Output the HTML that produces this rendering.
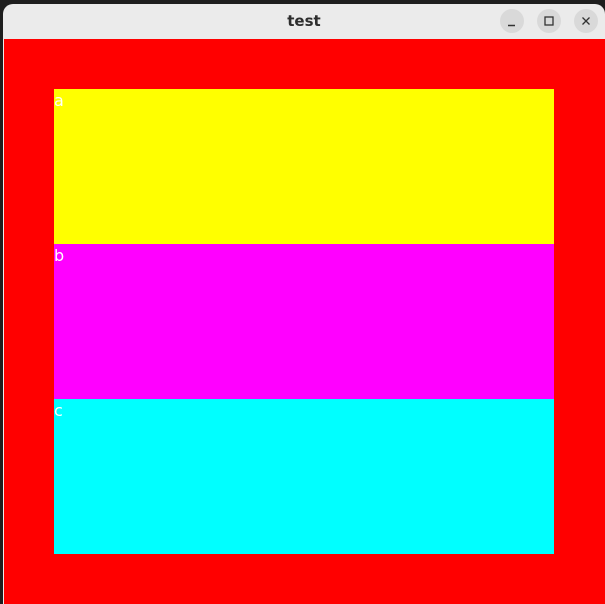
<!DOCTYPE html>
<html><head><meta charset="utf-8"><style>
html,body{margin:0;padding:0;width:605px;height:604px;overflow:hidden;background:#1e1e1e;font-family:"Liberation Sans","DejaVu Sans",sans-serif;position:relative}
.win{position:absolute;left:3px;top:4px;width:602px;height:600px;background:#ebebeb;border-radius:10px 10px 0 0;overflow:hidden}
.title{position:absolute;left:0;right:0;top:0;height:35px;text-align:center;line-height:35px;font-weight:bold;font-size:15px;color:#2e2e2e;font-family:"DejaVu Sans",sans-serif}
.btn{position:absolute;top:5px;width:24px;height:24px;border-radius:50%;background:#d9d9d9}
.red{position:absolute;left:4px;top:39px;width:601px;height:565px;background:#f00}
.blk{position:absolute;left:54px;width:500px;height:155px;color:#fff;font-family:"DejaVu Sans",sans-serif;font-size:16px;line-height:24px}
</style></head><body>
<div class="win">
<div class="title">test</div>
<div class="btn" style="left:497px"><svg width="24" height="24"><line x1="8" y1="16.5" x2="15" y2="16.5" stroke="#333" stroke-width="1.4"/></svg></div>
<div class="btn" style="left:534px"><svg width="24" height="24"><rect x="8" y="8" width="8" height="8" fill="none" stroke="#333" stroke-width="1.3"/></svg></div>
<div class="btn" style="left:571px"><svg width="24" height="24"><path d="M8.5 8.5L15.5 15.5M15.5 8.5L8.5 15.5" stroke="#333" stroke-width="1.3"/></svg></div>
</div>
<div class="red"></div>
<div class="blk" style="top:89px;background:#ff0">a</div>
<div class="blk" style="top:244px;background:#f0f">b</div>
<div class="blk" style="top:399px;background:#0ff">c</div>
</body></html>
